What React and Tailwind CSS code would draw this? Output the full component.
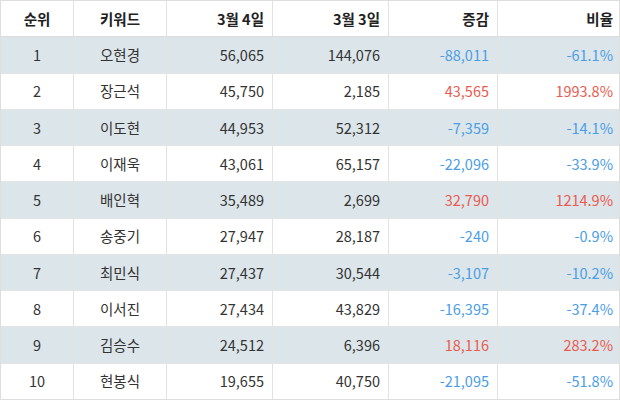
const rows = [
  { rank: 1, name: "오현경", d4: "56,065", d3: "144,076", diff: "-88,011", rate: "-61.1%", up: false },
  { rank: 2, name: "장근석", d4: "45,750", d3: "2,185", diff: "43,565", rate: "1993.8%", up: true },
  { rank: 3, name: "이도현", d4: "44,953", d3: "52,312", diff: "-7,359", rate: "-14.1%", up: false },
  { rank: 4, name: "이재욱", d4: "43,061", d3: "65,157", diff: "-22,096", rate: "-33.9%", up: false },
  { rank: 5, name: "배인혁", d4: "35,489", d3: "2,699", diff: "32,790", rate: "1214.9%", up: true },
  { rank: 6, name: "송중기", d4: "27,947", d3: "28,187", diff: "-240", rate: "-0.9%", up: false },
  { rank: 7, name: "최민식", d4: "27,437", d3: "30,544", diff: "-3,107", rate: "-10.2%", up: false },
  { rank: 8, name: "이서진", d4: "27,434", d3: "43,829", diff: "-16,395", rate: "-37.4%", up: false },
  { rank: 9, name: "김승수", d4: "24,512", d3: "6,396", diff: "18,116", rate: "283.2%", up: true },
  { rank: 10, name: "현봉식", d4: "19,655", d3: "40,750", diff: "-21,095", rate: "-51.8%", up: false },
]

// column widths: 73 / 93 / 106 / 116 / 109 / 123
const cols = "grid grid-cols-[73px_93px_106px_116px_109px_123px]"
const cell = "flex items-center border-r border-[#e2e2e2] last:border-r-0"

export default function App() {
  return (
    <div className="w-[620px] h-[400px] bg-white text-[#333] text-[14.5px] flex flex-col border border-[#dedede]"
      style={{ fontFamily: '"Noto Sans CJK KR", "Noto Sans", sans-serif' }}>
      {/* header */}
      <div className={`${cols} flex-1 font-bold text-[#222] border-b border-[#dcdcdc]`}>
        <div className={`${cell} justify-center`}>순위</div>
        <div className={`${cell} justify-center`}>키워드</div>
        <div className={`${cell} justify-end pr-[8px]`}>3월 4일</div>
        <div className={`${cell} justify-end pr-[8px]`}>3월 3일</div>
        <div className={`${cell} justify-end pr-[8px]`}>증감</div>
        <div className={`${cell} justify-end pr-[8px]`}>비율</div>
      </div>

      {rows.map((r, i) => {
        const tone = r.up ? "text-[#ea5a4f]" : "text-[#4a9de6]"
        return (
          <div key={r.rank}
            className={`${cols} flex-1 border-b border-[#e4e4e4] last:border-b-0 ${i % 2 === 0 ? "bg-[#dce5ea]" : "bg-white"}`}>
            <div className={`${cell} justify-center`}>{r.rank}</div>
            <div className={`${cell} justify-center`}>{r.name}</div>
            <div className={`${cell} justify-end pr-[8px]`}>{r.d4}</div>
            <div className={`${cell} justify-end pr-[8px]`}>{r.d3}</div>
            <div className={`${cell} justify-end pr-[8px] ${tone}`}>{r.diff}</div>
            <div className={`${cell} justify-end pr-[8px] ${tone}`}>{r.rate}</div>
          </div>
        )
      })}
    </div>
  )
}
